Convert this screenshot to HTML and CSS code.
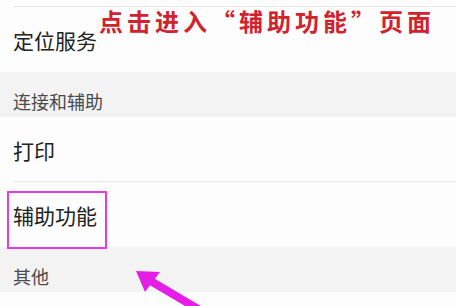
FILE: index.html
```html
<!DOCTYPE html>
<html lang="zh-CN">
<head>
  <meta charset="UTF-8">
  <title>设置</title>
  <link rel="stylesheet" href="styles.css">
</head>
<body>

<div class="screen">
  <div class="list">
    <div class="item-tail"></div>
    <div class="item first">定位服务</div>
    <div class="group-title">连接和辅助</div>
    <div class="item">打印</div>
    <div class="item">辅助功能</div>
    <div class="group-title">其他</div>
    <div class="item-rest"></div>
  </div>

  <!-- 标注 -->
  <div class="note">点击进入“辅助功能”页面</div>
  <div class="mark"></div>
  <svg class="arrow" width="456" height="306" viewBox="0 0 456 306">
    <line x1="149" y1="280" x2="220" y2="322" stroke="#e41ee6" stroke-width="8"/>
    <polygon points="136,271 160,272 145,292" fill="#e41ee6"/>
  </svg>
</div>

</body>
</html>
```

FILE: styles.css
```css
body {
  margin: 0;
  padding: 0;
  font-family: "Noto Sans CJK SC", "Noto Sans", sans-serif;
  background-color: #fdfdfd;
}
.screen {
  position: relative;
  width: 456px;
  height: 306px;
  overflow: hidden;
}
.list {
  display: flex;
  flex-direction: column;
}
.item-tail {
  height: 6px;
  margin-left: 13px;
  border-bottom: 1px solid #e8e8e8;
}
.item {
  height: 65px;
  display: flex;
  align-items: center;
  padding-left: 13px;
  font-size: 21px;
  color: #222;
  background-color: #fdfdfd;
}
.item.first {
  box-sizing: border-box;
  padding-top: 1px;
}
.item + .item {
  position: relative;
}
.item + .item::before {
  content: "";
  position: absolute;
  top: -1px;
  left: 13px;
  right: 0;
  border-top: 1px solid #e8e8e8;
}
.group-title {
  height: 45px;
  box-sizing: border-box;
  padding: 19px 0 0 13px;
  font-size: 18px;
  line-height: 20px;
  color: #4a4a4a;
  background-color: #f3f3f3;
}
.group-title + .item-rest {
  height: 20px;
}
.note {
  position: absolute;
  left: 99px;
  top: 5px;
  font-size: 24px;
  line-height: 32px;
  font-weight: bold;
  letter-spacing: 4px;
  color: #d1222e;
}
.mark {
  position: absolute;
  left: 7px;
  top: 191px;
  width: 96px;
  height: 54px;
  border: 2px solid #e23de4;
}
.arrow {
  position: absolute;
  left: 0;
  top: 0;
}
```
